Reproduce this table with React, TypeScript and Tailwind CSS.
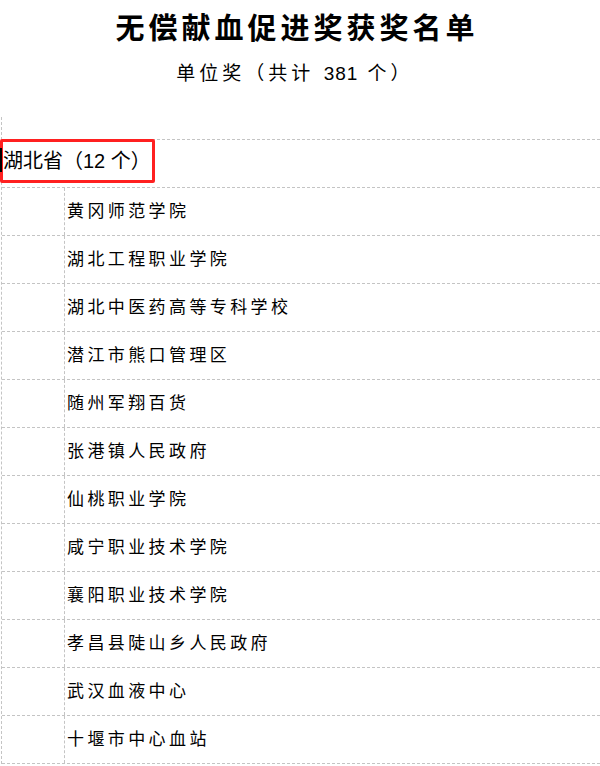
import React from "react";

const rows = [
  "黄冈师范学院",
  "湖北工程职业学院",
  "湖北中医药高等专科学校",
  "潜江市熊口管理区",
  "随州军翔百货",
  "张港镇人民政府",
  "仙桃职业学院",
  "咸宁职业技术学院",
  "襄阳职业技术学院",
  "孝昌县陡山乡人民政府",
  "武汉血液中心",
  "十堰市中心血站",
];

const cjk = { fontFamily: '"Noto Sans CJK SC", sans-serif' };
const mixed = { fontFamily: '"Liberation Sans", "Noto Sans CJK SC", sans-serif' };

export default function App() {
  return (
    <div className="w-[600px] h-[766px] overflow-hidden bg-white text-black">
      <div className="flex flex-col items-center pt-[8px]">
        <div className="text-[29px] leading-[36px] font-bold tracking-[4px] pr-[6px]" style={cjk}>
          无偿献血促进奖获奖名单
        </div>
        <div className="mt-[18px] text-[19px] leading-[24px] tracking-[4px] pr-[10px]" style={mixed}>
          单位奖（共计 <span className="tracking-[1px]">381</span> 个）
        </div>
      </div>
      <div className="mt-[31px] ml-[1px] border-l border-dashed border-[#c4c4c4]">
        <div className="h-[22px]" />
        <div className="relative h-[49px] border-t border-b border-dashed border-[#c4c4c4]">
          <div className="pt-[7px] pl-[1px] text-[20px] leading-[28px]" style={mixed}>
            湖北省（12 个）
          </div>
          <div className="absolute left-[-2px] top-[-1px] w-[155px] h-[44px] border-[3px] border-[#ff2020] rounded-[2px]" />
          <div className="absolute left-[-2px] top-[8px] w-[2px] h-[24px] bg-black" />
        </div>
        {rows.map((r) => (
          <div key={r} className="flex h-[48px] border-b border-dashed border-[#c4c4c4]">
            <div className="w-[63px] border-r border-dashed border-[#c4c4c4]" />
            <div
              className="flex items-center pl-[2px] pb-[4px] text-[17px] leading-[24px] tracking-[3.4px]"
              style={cjk}
            >
              {r}
            </div>
          </div>
        ))}
      </div>
    </div>
  );
}
